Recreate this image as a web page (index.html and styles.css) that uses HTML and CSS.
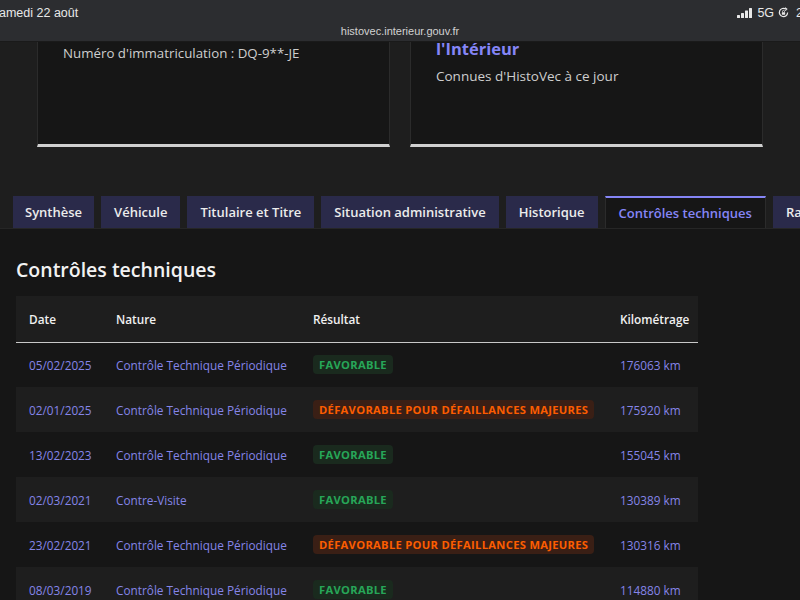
FILE: index.html
```html
<!DOCTYPE html>
<html lang="fr">

<head>
    <meta charset="UTF-8">
    <meta name="viewport" content="width=device-width, initial-scale=1.0">
    <title>HistoVec - Contrôles techniques</title>
    <link rel="stylesheet" href="styles.css">
</head>

<body>
    <!-- Barre d'état de la tablette -->
    <div class="statusbar">
        <div class="statusbar-row">
            <span class="statusbar-date">amedi 22 août</span>
            <span class="statusbar-icons">
                <svg class="signal" width="16" height="10" viewBox="0 0 16 10">
                    <rect x="0" y="7" width="3" height="3" rx="0.5" fill="#e8e8e8" />
                    <rect x="4" y="5" width="3" height="5" rx="0.5" fill="#e8e8e8" />
                    <rect x="8" y="2.5" width="3" height="7.5" rx="0.5" fill="#e8e8e8" />
                    <rect x="12" y="0" width="3" height="10" rx="0.5" fill="#e8e8e8" />
                </svg>
                <span>5G</span>
                <svg class="lock" width="11" height="11" viewBox="0 0 12 12">
                    <path d="M10.5 6 A4.5 4.5 0 1 1 8.5 2.2" fill="none" stroke="#e8e8e8" stroke-width="1.3" />
                    <path d="M7.6 0.8 L9.6 2.2 L7.9 3.9" fill="none" stroke="#e8e8e8" stroke-width="1.2" />
                    <rect x="4.2" y="5.6" width="3.6" height="2.8" rx="0.4" fill="#e8e8e8" />
                    <path d="M4.9 5.8 V4.8 A1.1 1.1 0 0 1 7.1 4.8 V5.8" fill="none" stroke="#e8e8e8" stroke-width="0.9" />
                </svg>
                <span class="statusbar-battery">21</span>
            </span>
        </div>
        <div class="statusbar-url">histovec.interieur.gouv.fr</div>
    </div>

    <!-- Cartes du haut -->
    <div class="cards">
        <div class="card">
            <p class="card-text card-text--first">Numéro d'immatriculation : DQ-9**-JE</p>
        </div>
        <div class="card">
            <h3 class="card-title">l'Intérieur</h3>
            <p class="card-text">Connues d'HistoVec à ce jour</p>
        </div>
    </div>

    <!-- Onglets -->
    <ul class="tabs">
        <li class="tab">Synthèse</li>
        <li class="tab">Véhicule</li>
        <li class="tab">Titulaire et Titre</li>
        <li class="tab">Situation administrative</li>
        <li class="tab">Historique</li>
        <li class="tab tab--active">Contrôles techniques</li>
        <li class="tab">Rapport</li>
    </ul>

    <div class="tab-panel">
        <h2 class="panel-title">Contrôles techniques</h2>

        <table class="ct-table">
            <colgroup>
                <col class="col-date">
                <col class="col-nature">
                <col class="col-result">
                <col class="col-km">
            </colgroup>
            <thead>
                <tr>
                    <th>Date</th>
                    <th>Nature</th>
                    <th>Résultat</th>
                    <th>Kilométrage</th>
                </tr>
            </thead>
            <tbody>
                <tr>
                    <td>05/02/2025</td>
                    <td>Contrôle Technique Périodique</td>
                    <td><span class="badge badge--ok">Favorable</span></td>
                    <td>176063 km</td>
                </tr>
                <tr>
                    <td>02/01/2025</td>
                    <td>Contrôle Technique Périodique</td>
                    <td><span class="badge badge--ko">Défavorable pour défaillances majeures</span></td>
                    <td>175920 km</td>
                </tr>
                <tr>
                    <td>13/02/2023</td>
                    <td>Contrôle Technique Périodique</td>
                    <td><span class="badge badge--ok">Favorable</span></td>
                    <td>155045 km</td>
                </tr>
                <tr>
                    <td>02/03/2021</td>
                    <td>Contre-Visite</td>
                    <td><span class="badge badge--ok">Favorable</span></td>
                    <td>130389 km</td>
                </tr>
                <tr>
                    <td>23/02/2021</td>
                    <td>Contrôle Technique Périodique</td>
                    <td><span class="badge badge--ko">Défavorable pour défaillances majeures</span></td>
                    <td>130316 km</td>
                </tr>
                <tr>
                    <td>08/03/2019</td>
                    <td>Contrôle Technique Périodique</td>
                    <td><span class="badge badge--ok">Favorable</span></td>
                    <td>114880 km</td>
                </tr>
            </tbody>
        </table>
    </div>
</body>

</html>
```

FILE: styles.css
```css
* {
    margin: 0;
    padding: 0;
    box-sizing: border-box;
}

body {
    font-family: "Open Sans", "DejaVu Sans", sans-serif;
    background-color: #1e1e1e;
    color: #cecece;
    width: 800px;
    height: 600px;
    overflow: hidden;
}

/* Status bar */
.statusbar {
    height: 42px;
    background-color: #2c2d30;
    border-bottom: 1px solid #1a1a1a;
    overflow: hidden;
}

.statusbar-row {
    display: flex;
    justify-content: space-between;
    align-items: center;
    height: 24px;
    padding-top: 1px;
    font-family: "Liberation Sans", Arial, sans-serif;
    font-size: 12.5px;
    color: #e8e8e8;
}

.statusbar-date {
    margin-left: -1px;
}

.statusbar-icons {
    display: flex;
    align-items: center;
    gap: 4px;
    margin-right: -10px;
}

.statusbar-battery {
    margin-left: 3px;
}

.statusbar-url {
    text-align: center;
    font-family: "Liberation Sans", Arial, sans-serif;
    font-size: 11px;
    color: #d2d2d2;
    line-height: 14px;
}

/* Cards */
.cards {
    display: grid;
    grid-template-columns: 353px 353px;
    gap: 20px;
    padding-left: 37px;
}

.card {
    height: 105px;
    background-color: #161616;
    border: 1px solid #2b2b2b;
    border-top: none;
    border-bottom: 3px solid #d0d0d0;
    padding: 0 25px;
}

.card-text {
    font-size: 13.5px;
    line-height: 20px;
    color: #cecece;
}

.card-text--first {
    font-size: 13.3px;
    margin-top: 1px;
}

.card-title {
    font-size: 16.5px;
    font-weight: 700;
    line-height: 16px;
    color: #8585f6;
    margin-top: -1px;
    margin-bottom: 9px;
}

/* Tabs */
.tabs {
    list-style: none;
    display: flex;
    gap: 7px;
    padding-left: 13px;
    margin-top: 49px;
    height: 32px;
    overflow: hidden;
}

.tab {
    flex-shrink: 0;
    padding: 0 13px;
    line-height: 32px;
    background-color: #2a2a4a;
    color: #ececec;
    font-size: 13px;
    font-weight: 600;
}

.tab:first-child {
    padding: 0 12px;
}

.tab--active {
    background-color: #161616;
    color: #8585f6;
    border-top: 2px solid #8585f6;
    border-left: 1px solid #2b2b2b;
    border-right: 1px solid #2b2b2b;
    line-height: 30px;
}

/* Panel */
.tab-panel {
    background-color: #161616;
    border-top: 1px solid #262626;
    padding: 27px 16px 0;
    height: 372px;
}

.panel-title {
    font-size: 19.5px;
    font-weight: 600;
    line-height: 28px;
    color: #f2f2f2;
    margin-bottom: 12px;
}

/* Table */
.ct-table {
    width: 682px;
    border-collapse: collapse;
    table-layout: fixed;
    font-size: 11.8px;
}

.col-date {
    width: 87px;
}

.col-nature {
    width: 197px;
}

.col-result {
    width: 307px;
}

.col-km {
    width: 91px;
}

.ct-table th {
    height: 46px;
    text-align: left;
    padding: 0 13px;
    background-color: #1e1e1e;
    color: #f0f0f0;
    font-weight: 600;
    font-size: 11.8px;
    border-bottom: 1px solid #c8c8c8;
}

.ct-table td {
    height: 45px;
    padding: 0 13px;
    color: #8585e8;
    white-space: nowrap;
}

.ct-table tbody tr:nth-child(even) {
    background-color: #1e1e1e;
}

/* Badges */
.badge {
    display: inline-block;
    padding: 0 6px;
    line-height: 19px;
    border-radius: 4px;
    font-size: 11.2px;
    font-weight: 700;
    text-transform: uppercase;
    letter-spacing: 0.3px;
}

.badge--ok {
    background-color: #1a2a1e;
    color: #27a658;
}

.badge--ko {
    background-color: #3a1f15;
    color: #fc5d00;
}
```
